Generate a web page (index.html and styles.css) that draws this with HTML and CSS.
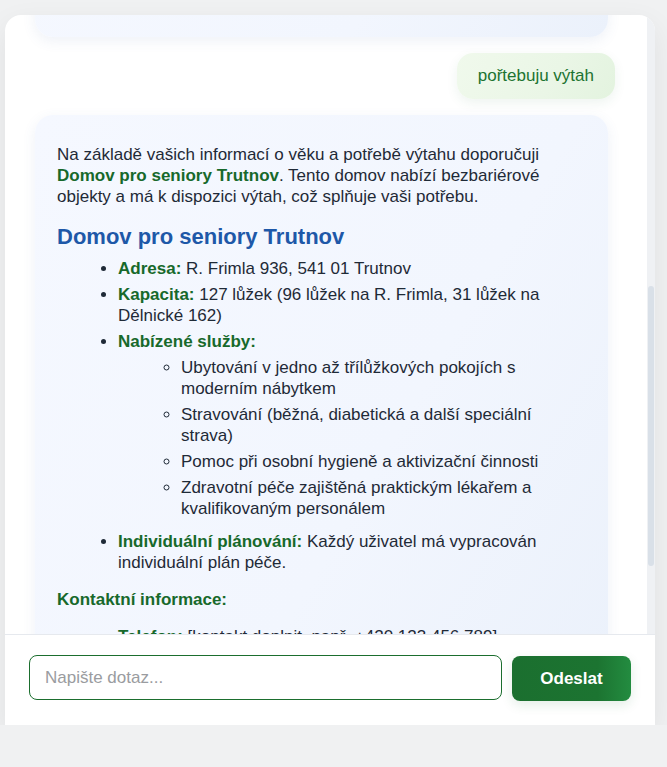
FILE: index.html
```html
<!DOCTYPE html>
<html lang="cs">
<head>
<meta charset="utf-8">
<title>Asistent – domovy pro seniory</title>
<link rel="stylesheet" href="styles.css">
</head>
<body>
<div class="card">
  <div class="viewport">
    <div class="chat" id="chat">
      <div class="msg bot">
        <p>Dobrý den! Jsem virtuální asistent, který vám pomůže najít vhodný domov pro seniory. Řekněte mi prosím, kolik vám je let a co potřebujete.</p>
      </div>
      <div class="msg user">je mi 81 let</div>
      <div class="msg bot">
        <p>Děkuji za informaci. Máte nějaké specifické potřeby, například bezbariérový přístup, výtah nebo zdravotní péči?</p>
      </div>
      <div class="msg user">bydlím v Trutnově</div>
      <div class="msg bot">
        <p>V Trutnově a blízkém okolí nabízí pobytové služby pro seniory několik zařízení. Abych vám mohl doporučit to nejvhodnější, potřebuji vědět, zda potřebujete bezbariérový přístup, výtah, nebo speciální zdravotní péči.</p>
      </div>
      <div class="msg user" id="anchor">pořtebuju výtah</div>
      <div class="msg bot">
        <p>Na základě vašich informací o věku a potřebě výtahu doporučuji <strong>Domov pro seniory Trutnov</strong>. Tento domov nabízí bezbariérové objekty a má k dispozici výtah, což splňuje vaši potřebu.</p>
        <h3>Domov pro seniory Trutnov</h3>
        <ul>
          <li><strong>Adresa:</strong> R. Frimla 936, 541 01 Trutnov</li>
          <li><strong>Kapacita:</strong> 127 lůžek (96 lůžek na R. Frimla, 31 lůžek na Dělnické 162)</li>
          <li><strong>Nabízené služby:</strong>
            <ul class="sub">
              <li>Ubytování v jedno až třílůžkových pokojích s moderním nábytkem</li>
              <li>Stravování (běžná, diabetická a další speciální strava)</li>
              <li>Pomoc při osobní hygieně a aktivizační činnosti</li>
              <li>Zdravotní péče zajištěná praktickým lékařem a kvalifikovaným personálem</li>
            </ul>
          </li>
          <li><strong>Individuální plánování:</strong> Každý uživatel má vypracován individuální plán péče.</li>
        </ul>
        <p class="label">Kontaktní informace:</p>
        <ul>
          <li><strong>Telefon:</strong> [kontakt doplnit, např. +420 123 456 789]</li>
          <li><strong>E-mail:</strong> [doplnit]</li>
        </ul>
      </div>
    </div>
    <div class="scrollbar"><div class="thumb"></div></div>
  </div>
  <form class="composer" onsubmit="return false;">
    <input class="field" type="text" placeholder="Napište dotaz..." autofocus>
    <button class="send" type="submit">Odeslat</button>
  </form>
</div>
<script src="app.js"></script>
</body>
</html>
```
FILE: styles.css
```css
* { box-sizing: border-box; }

html, body {
  margin: 0;
  background: #f0f1f2;
}

body {
  padding: 15px 12px 0 5px;
  font-family: "Liberation Sans", Arial, Helvetica, sans-serif;
  font-size: 17px;
  color: #1f2a37;
}

.card {
  width: 650px;
  height: 710px;
  background: #ffffff;
  border-radius: 16px 16px 0 0;
  box-shadow: 0 10px 30px rgba(0, 0, 0, 0.07);
  display: flex;
  flex-direction: column;
  overflow: hidden;
}

.viewport {
  flex: 1;
  min-height: 0;
  display: flex;
}

.chat {
  flex: 1;
  min-width: 0;
  position: relative;
  overflow: hidden;
  padding: 20px 32px 20px 30px;
  display: flex;
  flex-direction: column;
  gap: 16px;
}

.scrollbar {
  width: 8px;
  flex-shrink: 0;
  background: #eff1f4;
  padding: 271px 1px 0;
}

.thumb {
  height: 280px;
  border-radius: 4px;
  background: #d9e0e8;
}

.msg {
  line-height: 21px;
  flex-shrink: 0;
}

.msg.bot {
  margin-right: 7px;
  padding: 29px 22px 22px;
  border-radius: 18px;
  background: linear-gradient(120deg, #f5f8ff 0%, #f2f6fe 60%, #ebf1fb 100%);
  box-shadow: 0 4px 14px rgba(70, 100, 170, 0.09);
}

.msg.user {
  align-self: flex-end;
  padding: 12px 21px 13px;
  border-radius: 16px;
  color: #1c7331;
  background: linear-gradient(120deg, #f0f9ec 0%, #eaf6e6 60%, #e3f3df 100%);
  box-shadow: 0 4px 12px rgba(40, 120, 60, 0.08);
}

.msg p { margin: 0 0 16px; }
.msg p:last-child { margin-bottom: 0; }

.msg strong {
  color: #17692b;
  font-weight: bold;
}

.msg h3 {
  margin: 17px 0 8px;
  font-size: 22px;
  line-height: 26px;
  color: #1e58a8;
}

.msg ul {
  margin: 8px 0 16px;
  padding-left: 61px;
}

.msg > ul:last-child { margin-bottom: 0; }

.msg li + li { margin-top: 5px; }

.msg ul.sub {
  margin: 5px 0 12px;
  padding-left: 63px;
  list-style-type: circle;
}

.msg .label {
  margin: 16px 0 16px;
  font-weight: bold;
  color: #17692b;
}

.composer {
  display: flex;
  gap: 10px;
  padding: 20px 24px 24px;
  border-top: 1px solid #e6e9ee;
  background: #ffffff;
}

.field {
  flex: 1;
  height: 45px;
  padding: 0 15px;
  border: 1px solid #1b6e2e;
  border-radius: 8px;
  font-family: "Liberation Sans", Arial, Helvetica, sans-serif;
  font-size: 17px;
  color: #1f2a37;
  background: #ffffff;
  outline: none;
}

.field::placeholder { color: #9a9ca0; }

.send {
  width: 119px;
  height: 45px;
  margin-top: 1px;
  border: none;
  border-radius: 8px;
  font-family: "Liberation Sans", Arial, Helvetica, sans-serif;
  font-size: 17px;
  font-weight: bold;
  color: #ffffff;
  background: linear-gradient(90deg, #1b6f2f 0%, #1c7431 72%, #238c40 100%);
  box-shadow: 0 4px 12px rgba(27, 110, 46, 0.12);
  cursor: pointer;
}
```
FILE: app.js
```js
var chat = document.getElementById('chat');
var anchor = document.getElementById('anchor');
chat.scrollTop = anchor.offsetTop - 38;
```
